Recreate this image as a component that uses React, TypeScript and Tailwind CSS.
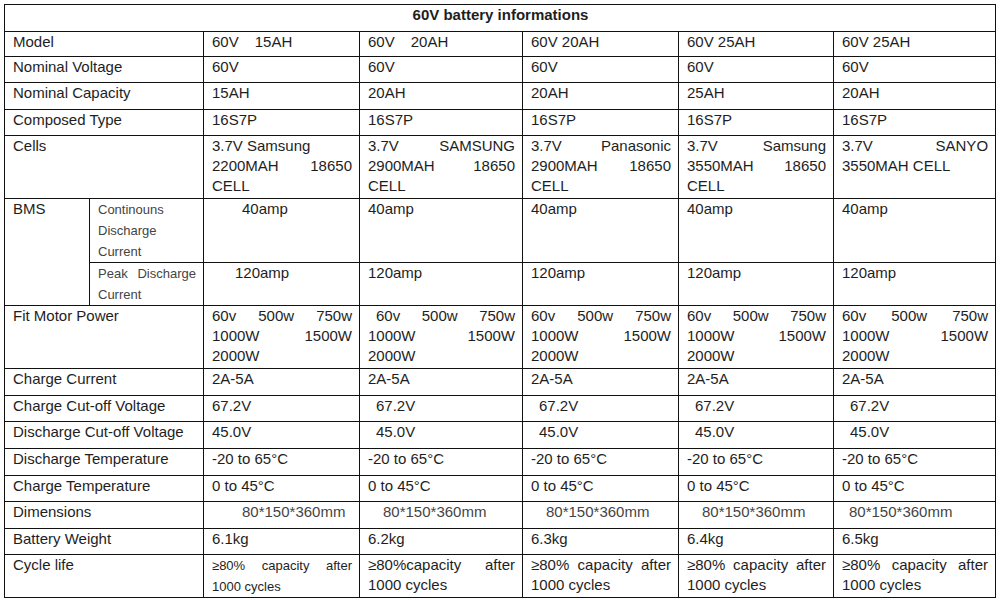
import React from "react";

const base = "border border-[#111] align-top pl-[8px] pr-[7px] py-0 whitespace-pre";
const td = `${base} text-[15px] leading-[20px] text-[#1e1e1e]`;
const tdSmall = `${base} text-[13px] leading-[21px] text-[#444]`;
const tdDim = `${base} text-[15px] leading-[20px] text-[#444]`;
const tdCyc2 = `${base} text-[13px] leading-[21px] text-[#1e1e1e]`;
const tdTitle = `${base} text-[15px] leading-[20px] text-[#1e1e1e] text-center font-bold`;

function J({ words, className = "" }: { words: string[]; className?: string }) {
  return (
    <div className={`flex justify-between ${className}`}>
      {words.map((w, i) => (
        <span key={i}>{w}</span>
      ))}
    </div>
  );
}

type Val = React.ReactNode;

function SimpleRow({
  label,
  vals,
  h,
  valTd = td,
}: {
  label: string;
  vals: Val[];
  h: string;
  valTd?: string;
}) {
  return (
    <tr className={h}>
      <td colSpan={2} className={td}>
        {label}
      </td>
      {vals.map((v, i) => (
        <td key={i} className={valTd}>
          {v}
        </td>
      ))}
    </tr>
  );
}

export default function App() {
  return (
    <div className="w-[1000px] h-[600px] bg-white pl-[4px] pt-[4px] font-['Liberation_Sans',Arial,sans-serif]">
      <table className="table-fixed border-collapse w-[991px]">
        <colgroup>
          <col className="w-[85px]" />
          <col className="w-[114px]" />
          <col className="w-[156px]" />
          <col className="w-[163px]" />
          <col className="w-[156px]" />
          <col className="w-[155px]" />
          <col className="w-[162px]" />
        </colgroup>
        <tbody>
          <tr className="h-[27px]">
            <td colSpan={7} className={tdTitle}>
              60V battery informations
            </td>
          </tr>
          <SimpleRow
            label="Model"
            h="h-[25px]"
            vals={[
              <>
                60V<span className="ml-[16px]">15AH</span>
              </>,
              <>
                60V<span className="ml-[16px]">20AH</span>
              </>,
              "60V 20AH",
              "60V 25AH",
              "60V 25AH",
            ]}
          />
          <SimpleRow label="Nominal Voltage" h="h-[26px]" vals={["60V", "60V", "60V", "60V", "60V"]} />
          <SimpleRow
            label="Nominal Capacity"
            h="h-[27px]"
            vals={["15AH", "20AH", "20AH", "25AH", "20AH"]}
          />
          <SimpleRow
            label="Composed Type"
            h="h-[26px]"
            vals={["16S7P", "16S7P", "16S7P", "16S7P", "16S7P"]}
          />
          <tr className="h-[63px]">
            <td colSpan={2} className={td}>
              Cells
            </td>
            <td className={td}>
              <div>3.7V Samsung</div>
              <J words={["2200MAH", "18650"]} />
              <div>CELL</div>
            </td>
            <td className={td}>
              <J words={["3.7V", "SAMSUNG"]} />
              <J words={["2900MAH", "18650"]} />
              <div>CELL</div>
            </td>
            <td className={td}>
              <J words={["3.7V", "Panasonic"]} />
              <J words={["2900MAH", "18650"]} />
              <div>CELL</div>
            </td>
            <td className={td}>
              <J words={["3.7V", "Samsung"]} />
              <J words={["3550MAH", "18650"]} />
              <div>CELL</div>
            </td>
            <td className={td}>
              <J words={["3.7V", "SANYO"]} />
              <div>3550MAH CELL</div>
            </td>
          </tr>
          <tr className="h-[64px]">
            <td rowSpan={2} className={td}>
              BMS
            </td>
            <td className={tdSmall}>
              <div>Continouns</div>
              <div>Discharge</div>
              <div>Current</div>
            </td>
            <td className={td}>
              <span className="ml-[30px]">40amp</span>
            </td>
            <td className={td}>40amp</td>
            <td className={td}>40amp</td>
            <td className={td}>40amp</td>
            <td className={td}>40amp</td>
          </tr>
          <tr className="h-[41px]">
            <td className={tdSmall}>
              <J words={["Peak", "Discharge"]} />
              <div>Current</div>
            </td>
            <td className={td}>
              <span className="ml-[23px]">120amp</span>
            </td>
            <td className={td}>120amp</td>
            <td className={td}>120amp</td>
            <td className={td}>120amp</td>
            <td className={td}>120amp</td>
          </tr>
          <tr className="h-[63px]">
            <td colSpan={2} className={td}>
              Fit Motor Power
            </td>
            {[0, 1, 2, 3, 4].map((i) => (
              <td key={i} className={td}>
                <J words={["60v", "500w", "750w"]} className={i === 1 ? "pl-[8px]" : ""} />
                <J words={["1000W", "1500W"]} />
                <div>2000W</div>
              </td>
            ))}
          </tr>
          <SimpleRow
            label="Charge Current"
            h="h-[27px]"
            vals={["2A-5A", "2A-5A", "2A-5A", "2A-5A", "2A-5A"]}
          />
          <SimpleRow
            label="Charge Cut-off Voltage"
            h="h-[26px]"
            vals={[
              "67.2V",
              <span className="ml-[8px]">67.2V</span>,
              <span className="ml-[8px]">67.2V</span>,
              <span className="ml-[8px]">67.2V</span>,
              <span className="ml-[8px]">67.2V</span>,
            ]}
          />
          <SimpleRow
            label="Discharge Cut-off Voltage"
            h="h-[27px]"
            vals={[
              "45.0V",
              <span className="ml-[8px]">45.0V</span>,
              <span className="ml-[8px]">45.0V</span>,
              <span className="ml-[8px]">45.0V</span>,
              <span className="ml-[8px]">45.0V</span>,
            ]}
          />
          <SimpleRow
            label="Discharge Temperature"
            h="h-[27px]"
            vals={["-20 to 65°C", "-20 to 65°C", "-20 to 65°C", "-20 to 65°C", "-20 to 65°C"]}
          />
          <SimpleRow
            label="Charge Temperature"
            h="h-[26px]"
            vals={["0 to 45°C", "0 to 45°C", "0 to 45°C", "0 to 45°C", "0 to 45°C"]}
          />
          <SimpleRow
            label="Dimensions"
            h="h-[27px]"
            valTd={tdDim}
            vals={[
              <span className="ml-[30px]">80*150*360mm</span>,
              <span className="ml-[15px]">80*150*360mm</span>,
              <span className="ml-[15px]">80*150*360mm</span>,
              <span className="ml-[15px]">80*150*360mm</span>,
              <span className="ml-[7px]">80*150*360mm</span>,
            ]}
          />
          <SimpleRow
            label="Battery Weight"
            h="h-[26px]"
            vals={["6.1kg", "6.2kg", "6.3kg", "6.4kg", "6.5kg"]}
          />
          <tr className="h-[42px]">
            <td colSpan={2} className={td}>
              Cycle life
            </td>
            <td className={tdCyc2}>
              <J words={["≥80%", "capacity", "after"]} />
              <div>1000 cycles</div>
            </td>
            <td className={td}>
              <J words={["≥80%capacity", "after"]} />
              <div>1000 cycles</div>
            </td>
            <td className={td}>
              <J words={["≥80%", "capacity", "after"]} />
              <div>1000 cycles</div>
            </td>
            <td className={td}>
              <J words={["≥80%", "capacity", "after"]} />
              <div>1000 cycles</div>
            </td>
            <td className={td}>
              <J words={["≥80%", "capacity", "after"]} />
              <div>1000 cycles</div>
            </td>
          </tr>
        </tbody>
      </table>
    </div>
  );
}
